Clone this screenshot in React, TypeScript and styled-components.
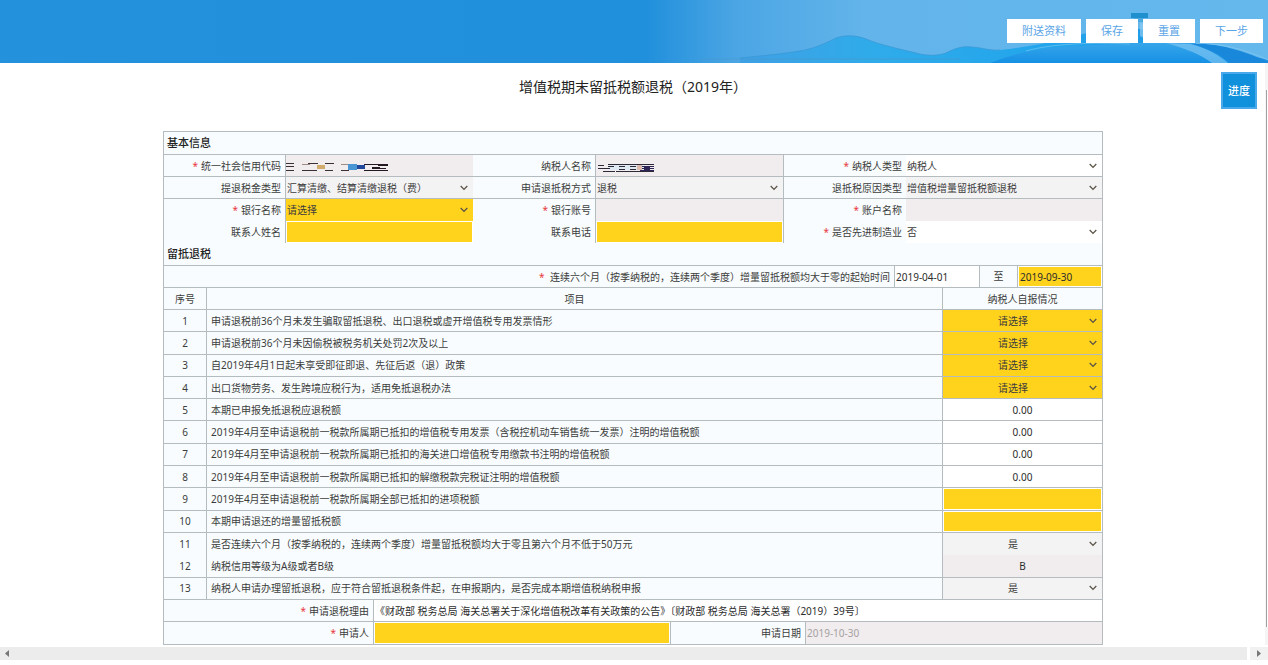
import React from "react";
import styled, { createGlobalStyle } from "styled-components";

const LINE = "#b4bcc0";
const LABEL_BG = "#f8fcfe";
const YELLOW = "#ffd21c";
const LOCKED = "#f1edee";
const MUTED = "#f4f3f4";

type Tone = "white" | "yellow" | "locked" | "muted";
const toneColor: Record<Tone, string> = {
  white: "#ffffff",
  yellow: YELLOW,
  locked: LOCKED,
  muted: MUTED,
};

const GlobalStyle = createGlobalStyle`
  *, *::before, *::after { box-sizing: border-box; }
  body {
    margin: 0;
    background: #fff;
    color: #3c3c3c;
    font-family: "Noto Sans", "Noto Sans CJK SC", sans-serif;
    font-size: 10px;
    line-height: 14px;
  }
  input, select, button { font: inherit; color: inherit; }
`;

const Page = styled.div`
  display: flex;
  flex-direction: column;
  min-height: 100vh;
`;

const Header = styled.header`
  position: relative;
  display: flex;
  justify-content: flex-end;
  height: 63px;
  padding: 19px 5px 0;
  background: linear-gradient(90deg, #2391dc 0%, #2190dc 51%, #4ba5e4 58%, #62b4ea 68%, #64b8ec 100%);
`;

const Scenery = styled.svg`
  position: absolute;
  right: 0;
  bottom: 0;
  width: 568px;
  height: 63px;
`;

const Actions = styled.div`
  position: relative;
  display: flex;
  gap: 5px;
`;

const ActionButton = styled.button`
  height: 24px;
  padding: 0 15px;
  border: 0;
  background: #fff;
  color: #5aa5e6;
  font-size: 11px;
  line-height: 24px;
`;

const Body = styled.div`
  display: flex;
`;

const Main = styled.main`
  position: relative;
  flex: 1;
  min-width: 0;
  padding: 14px 162px 0 163px;
`;

const Title = styled.h1`
  margin: 0 0 34px;
  color: #222;
  font-size: 14px;
  font-weight: 400;
  line-height: 20px;
  text-align: center;
`;

const ProgressButton = styled.button`
  position: absolute;
  top: 9px;
  right: 8px;
  width: 36px;
  height: 37px;
  padding: 0;
  border: 2px solid #4aa9ea;
  background: #1190dc;
  color: #fff;
  font-size: 11px;
  font-weight: 500;
`;

const Sheet = styled.form`
  border: 1px solid ${LINE};
  background: ${LABEL_BG};
`;

const SectionTitle = styled.h2`
  height: 23px;
  margin: 0;
  padding: 0 3px;
  border-bottom: 1px solid ${LINE};
  color: #222;
  font-size: 11px;
  font-weight: 500;
  line-height: 22px;
`;

const InfoGrid = styled.div`
  display: grid;
  grid-template-columns: 121fr 188fr 122fr 189fr 122fr 196fr;
  grid-auto-rows: 22px;
`;

const DateRow = styled.div`
  display: grid;
  grid-template-columns: 1fr 85px 39px 84px;
  grid-auto-rows: 21px;
  border-bottom: 1px solid ${LINE};
`;

const FooterGrid = styled.div`
  display: grid;
  grid-template-columns: 209fr 298fr 134fr 297fr;
  grid-auto-rows: 22px;
`;

const LabelCell = styled.label<{ $line?: boolean }>`
  padding: 0 4px;
  border-bottom: ${(p) => (p.$line ? `1px solid ${LINE}` : "0")};
  line-height: 22px;
  text-align: right;
  white-space: nowrap;
`;

const Star = styled.span`
  margin-right: 3px;
  color: #e8383d;
`;

const FieldCell = styled.div<{ $tone: Tone; $inset?: boolean; $line?: boolean; $left?: boolean; $right?: boolean; $wide?: boolean }>`
  position: relative;
  display: flex;
  min-width: 0;
  padding: ${(p) => (p.$inset ? "1px" : "0")};
  grid-column: ${(p) => (p.$wide ? "span 3" : "auto")};
  border-bottom: ${(p) => (p.$line ? `1px solid ${LINE}` : "0")};
  border-left: ${(p) => (p.$left ? `1px solid ${LINE}` : "0")};
  border-right: ${(p) => (p.$right ? `1px solid ${LINE}` : "0")};
  background: ${(p) => (p.$inset ? "#fff" : toneColor[p.$tone])};
`;

const TextInput = styled.input<{ $tone: Tone; $center?: boolean; $faded?: boolean }>`
  flex: 1;
  width: 100%;
  min-width: 0;
  height: 100%;
  padding: 0 1px;
  border: 0;
  border-radius: 0;
  outline: 0;
  background: ${(p) => toneColor[p.$tone]};
  color: ${(p) => (p.$faded ? "#a5a1a2" : "#2c2c2c")};
  text-align: ${(p) => (p.$center ? "center" : "left")};
`;

const SelectBox = styled.select<{ $tone: Tone; $center?: boolean }>`
  flex: 1;
  width: 100%;
  min-width: 0;
  height: 100%;
  padding: 0 20px 0 1px;
  border: 0;
  border-radius: 0;
  outline: 0;
  appearance: none;
  background: ${(p) => toneColor[p.$tone]};
  text-align: ${(p) => (p.$center ? "center" : "left")};
  text-align-last: ${(p) => (p.$center ? "center" : "left")};
`;

const ChevronIcon = styled.svg`
  position: absolute;
  top: 50%;
  right: 5px;
  width: 8px;
  height: 6px;
  margin-top: -3px;
  pointer-events: none;
`;

const Mosaic = styled.svg`
  position: absolute;
  top: 5px;
  left: 0;
  height: 14px;
  pointer-events: none;
`;

const Between = styled.span`
  border-left: 1px solid ${LINE};
  border-right: 1px solid ${LINE};
  background: ${LABEL_BG};
  line-height: 21px;
  text-align: center;
`;

const ItemTable = styled.table`
  width: 100%;
  height: 312px;
  table-layout: fixed;
  border-collapse: separate;
  border-spacing: 0;
`;

const Th = styled.th`
  height: 22px;
  padding: 0;
  border-bottom: 1px solid ${LINE};
  border-left: 1px solid ${LINE};
  font-weight: 400;
  text-align: center;
  &:first-child { border-left: 0; }
`;

const Td = styled.td<{ $kind: "no" | "text" | "value"; $line: boolean }>`
  height: 22px;
  padding: ${(p) => (p.$kind === "text" ? "0 4px" : "0")};
  border-bottom: ${(p) => (p.$line ? `1px solid ${LINE}` : "0")};
  border-left: ${(p) => (p.$kind === "no" ? "0" : `1px solid ${LINE}`)};
  text-align: ${(p) => (p.$kind === "text" ? "left" : "center")};
  white-space: nowrap;
`;

const ValueCell = styled.div<{ $inset?: boolean }>`
  position: relative;
  display: flex;
  height: 100%;
  min-height: 21px;
  padding: ${(p) => (p.$inset ? "1px" : "0")};
  background: #fff;
`;

const VerticalTrack = styled.div`
  display: flex;
  width: 3px;
  padding: 27px 0 18px 1px;
  background: #f5f5f5;
`;

const VerticalThumb = styled.div`
  flex: 1;
  border-left: 1px solid #a0a0a0;
  background: #fff;
`;

const HorizontalBar = styled.div`
  display: flex;
  gap: 3px;
  height: 13px;
  margin: 2px 0 6px;
`;

const HorizontalTrack = styled.div`
  display: flex;
  flex: 1;
  align-items: center;
  padding: 0 5px;
  background: #ececec;
`;

const TrackEnd = styled.div`
  display: flex;
  align-items: center;
  justify-content: center;
  width: 18px;
  background: #f1f1f1;
`;

const Arrow = styled.svg`
  width: 4px;
  height: 7px;
`;

const Chevron = () => (
  <ChevronIcon viewBox="0 0 8 6" fill="none" stroke="#5c5648" strokeWidth="1.3" aria-hidden="true">
    <path d="M0.7 1 L4 4.4 L7.3 1" />
  </ChevronIcon>
);

const CreditCodeMask = () => (
  <Mosaic viewBox="0 0 104 14" width="104" aria-hidden="true">
    <g fill="#3b3034">
      <rect x="0" y="3" width="8" height="1" /><rect x="0" y="6" width="8" height="1" /><rect x="0" y="10" width="8" height="1" />
      <rect x="22" y="3" width="10" height="1" /><rect x="39" y="3" width="9" height="1" />
      <rect x="16" y="10" width="15" height="1" /><rect x="39" y="10" width="8" height="1" />
      <rect x="55" y="10" width="8" height="1" />
    </g>
    <g fill="#a08a86">
      <rect x="16" y="4" width="8" height="1" /><rect x="55" y="4" width="8" height="1" />
    </g>
    <g fill="#241823">
      <rect x="78" y="4" width="16" height="1" /><rect x="92" y="4" width="10" height="2" />
      <rect x="86" y="7" width="8" height="2" /><rect x="78" y="10" width="24" height="1" />
      <rect x="92" y="8" width="8" height="1" />
    </g>
    <rect x="31" y="5" width="8" height="4" fill="#d0ab6c" />
    <rect x="62" y="4" width="9" height="6" fill="#4a95d4" />
    <rect x="71" y="5" width="8" height="4" fill="#23479a" />
  </Mosaic>
);

const NameMask = () => (
  <Mosaic viewBox="0 0 60 14" width="60" aria-hidden="true">
    <rect x="13" y="5" width="36" height="5" fill="#dfe9f3" />
    <g fill="#2d2936">
      <rect x="2" y="5" width="6" height="1" /><rect x="2" y="8" width="12" height="1" /><rect x="7" y="11" width="12" height="1" />
      <rect x="12" y="4" width="46" height="1" /><rect x="12" y="6" width="6" height="1" /><rect x="20" y="11" width="38" height="1" />
      <rect x="23" y="6" width="6" height="1" /><rect x="23" y="9" width="6" height="1" /><rect x="34" y="6" width="6" height="1" /><rect x="34" y="9" width="6" height="1" />
    </g>
    <rect x="41" y="5" width="5" height="5" fill="#dcb9ae" />
    <g fill="#2e2456">
      <rect x="48" y="6" width="6" height="5" /><rect x="46" y="6" width="12" height="1" /><rect x="46" y="8" width="12" height="1" /><rect x="44" y="10" width="14" height="1" />
    </g>
  </Mosaic>
);

interface InfoField {
  id: string;
  label: string;
  required?: boolean;
  kind: "input" | "select";
  value?: string;
  tone: Tone;
  mask?: React.ReactNode;
}

const infoRows: InfoField[][] = [
  [
    { id: "creditCode", label: "统一社会信用代码", required: true, kind: "input", tone: "locked", mask: <CreditCodeMask /> },
    { id: "payerName", label: "纳税人名称", kind: "input", tone: "locked", mask: <NameMask /> },
    { id: "payerType", label: "纳税人类型", required: true, kind: "select", value: "纳税人", tone: "white" },
  ],
  [
    { id: "refundType", label: "提退税金类型", kind: "select", value: "汇算清缴、结算清缴退税（费）", tone: "muted" },
    { id: "refundMethod", label: "申请退抵税方式", kind: "select", value: "退税", tone: "muted" },
    { id: "refundReason", label: "退抵税原因类型", kind: "select", value: "增值税增量留抵税额退税", tone: "muted" },
  ],
  [
    { id: "bankName", label: "银行名称", required: true, kind: "select", value: "请选择", tone: "yellow" },
    { id: "bankAccount", label: "银行账号", required: true, kind: "input", tone: "locked" },
    { id: "accountName", label: "账户名称", required: true, kind: "input", tone: "locked" },
  ],
  [
    { id: "contactName", label: "联系人姓名", kind: "input", tone: "yellow" },
    { id: "contactPhone", label: "联系电话", kind: "input", tone: "yellow" },
    { id: "advanced", label: "是否先进制造业", required: true, kind: "select", value: "否", tone: "white" },
  ],
];

interface Item {
  text: string;
  kind: "input" | "select";
  value: string;
  tone: Tone;
}

const items: Item[] = [
  { text: "申请退税前36个月未发生骗取留抵退税、出口退税或虚开增值税专用发票情形", kind: "select", value: "请选择", tone: "yellow" },
  { text: "申请退税前36个月未因偷税被税务机关处罚2次及以上", kind: "select", value: "请选择", tone: "yellow" },
  { text: "自2019年4月1日起未享受即征即退、先征后返（退）政策", kind: "select", value: "请选择", tone: "yellow" },
  { text: "出口货物劳务、发生跨境应税行为，适用免抵退税办法", kind: "select", value: "请选择", tone: "yellow" },
  { text: "本期已申报免抵退税应退税额", kind: "input", value: "0.00", tone: "white" },
  { text: "2019年4月至申请退税前一税款所属期已抵扣的增值税专用发票（含税控机动车销售统一发票）注明的增值税额", kind: "input", value: "0.00", tone: "white" },
  { text: "2019年4月至申请退税前一税款所属期已抵扣的海关进口增值税专用缴款书注明的增值税额", kind: "input", value: "0.00", tone: "white" },
  { text: "2019年4月至申请退税前一税款所属期已抵扣的解缴税款完税证注明的增值税额", kind: "input", value: "0.00", tone: "white" },
  { text: "2019年4月至申请退税前一税款所属期全部已抵扣的进项税额", kind: "input", value: "", tone: "yellow" },
  { text: "本期申请退还的增量留抵税额", kind: "input", value: "", tone: "yellow" },
  { text: "是否连续六个月（按季纳税的，连续两个季度）增量留抵税额均大于零且第六个月不低于50万元", kind: "select", value: "是", tone: "muted" },
  { text: "纳税信用等级为A级或者B级", kind: "input", value: "B", tone: "locked" },
  { text: "纳税人申请办理留抵退税，应于符合留抵退税条件起，在申报期内，是否完成本期增值税纳税申报", kind: "select", value: "是", tone: "muted" },
];

const HeaderScenery = () => (
  <Scenery viewBox="0 0 568 63" aria-hidden="true">
    <defs>
      <linearGradient id="hill" x1="0" x2="1" y1="0" y2="0">
        <stop offset="0" stopColor="#3fa0e4" />
        <stop offset="0.25" stopColor="#2fabea" />
        <stop offset="0.6" stopColor="#22a5ec" />
        <stop offset="1" stopColor="#1b8fe2" />
      </linearGradient>
      <linearGradient id="shore" x1="0" x2="0" y1="0" y2="1">
        <stop offset="0" stopColor="#38a6ea" />
        <stop offset="1" stopColor="#1590e4" />
      </linearGradient>
    </defs>
    <path d="M40 58 C70 55 90 53 105 50 C118 47 128 42 136 38 C144 35 156 35 166 39 C180 45 200 49 216 53 C226 56 238 56 246 53 C256 48 262 46 272 47 C284 48 290 51 300 50 C340 46 366 38 400 30 C424 26 440 28 452 32 C480 42 520 48 568 60 V63 H40 Z" fill="url(#hill)" />
    <path d="M40 58 C70 55 90 53 105 50 C118 47 128 42 136 38 C144 35 156 35 166 39 C180 45 200 49 216 53 C226 56 238 56 246 53 C256 48 262 46 272 47 C284 48 290 51 300 50" fill="none" stroke="#3a98d6" strokeWidth="0.8" />
    <path d="M0 59 H260" stroke="#4a97c8" strokeWidth="0.6" />
    <path d="M290 63 C320 52 340 47 380 46 C430 43 470 41 500 44 C530 50 550 56 568 62 V63 Z" fill="url(#shore)" />
    <path d="M326 51 C350 44 390 42 430 44" fill="none" stroke="#6fc0f0" strokeWidth="0.8" />
    <path d="M440 22 L448 26 L448 40 L440 36 Z" fill="#8ccbf2" opacity="0.7" />
    <path d="M466 43 L490 44 C508 48 520 56 528 63 H512 C500 54 484 48 466 43 Z" fill="#7cc4f2" opacity="0.7" />
    <path d="M492 44 C516 42 548 52 568 62 V63 H530 C520 54 506 48 492 44 Z" fill="#1a88da" />
    <path d="M496 43 C520 43 548 50 568 60" fill="none" stroke="#7cc6f2" strokeWidth="0.8" />
    <rect x="431" y="13" width="17" height="5" fill="#1f8fcd" />
    <path d="M434 18 H444 V22 H434 Z" fill="#4aa9e0" />
  </Scenery>
);

const Req = () => <Star>*</Star>;

export default function App() {
  return (
    <Page>
      <GlobalStyle />
      <Header>
        <HeaderScenery />
        <Actions>
          {["附送资料", "保存", "重置", "下一步"].map((t) => (
            <ActionButton key={t} type="button">{t}</ActionButton>
          ))}
        </Actions>
      </Header>
      <Body>
        <Main>
          <Title>增值税期末留抵税额退税（2019年）</Title>
          <ProgressButton type="button">进度</ProgressButton>
          <Sheet>
            <SectionTitle>基本信息</SectionTitle>
            <InfoGrid>
              {infoRows.map((row, r) =>
                row.map((f, c) => (
                  <React.Fragment key={f.id}>
                    <LabelCell htmlFor={f.id} $line={r < 2}>
                      {f.required && <Req />}
                      {f.label}
                    </LabelCell>
                    <FieldCell $tone={f.tone} $inset={r === 3 && f.kind === "input"} $line={r < 2} $left={c < 2} $right={c === 1}>
                      {f.kind === "select" ? (
                        <>
                          <SelectBox id={f.id} $tone={f.tone}>
                            <option>{f.value}</option>
                          </SelectBox>
                          <Chevron />
                        </>
                      ) : (
                        <TextInput id={f.id} $tone={f.tone} readOnly={f.tone === "locked"} />
                      )}
                      {f.mask}
                    </FieldCell>
                  </React.Fragment>
                ))
              )}
            </InfoGrid>
            <SectionTitle>留抵退税</SectionTitle>
            <DateRow>
              <LabelCell htmlFor="dateFrom">
                <Req /> 连续六个月（按季纳税的，连续两个季度）增量留抵税额均大于零的起始时间
              </LabelCell>
              <FieldCell $tone="white" $left>
                <TextInput id="dateFrom" $tone="white" defaultValue="2019-04-01" />
              </FieldCell>
              <Between>至</Between>
              <FieldCell $tone="yellow" $inset>
                <TextInput aria-label="截止时间" $tone="yellow" defaultValue="2019-09-30" />
              </FieldCell>
            </DateRow>
            <ItemTable>
              <colgroup>
                <col style={{ width: 42 }} />
                <col />
                <col style={{ width: 160 }} />
              </colgroup>
              <thead>
                <tr>
                  <Th scope="col">序号</Th>
                  <Th scope="col">项目</Th>
                  <Th scope="col">纳税人自报情况</Th>
                </tr>
              </thead>
              <tbody>
                {items.map((it, i) => {
                  const line = i !== 10;
                  const id = `item${i + 1}`;
                  return (
                    <tr key={id}>
                      <Td $kind="no" $line={line}>{i + 1}</Td>
                      <Td $kind="text" $line={line}>
                        <label htmlFor={id}>{it.text}</label>
                      </Td>
                      <Td $kind="value" $line={line}>
                        <ValueCell $inset={it.kind === "input" && it.tone === "yellow"}>
                          {it.kind === "select" ? (
                            <>
                              <SelectBox id={id} $tone={it.tone} $center>
                                <option>{it.value}</option>
                              </SelectBox>
                              <Chevron />
                            </>
                          ) : (
                            <TextInput id={id} $tone={it.tone} $center defaultValue={it.value} />
                          )}
                        </ValueCell>
                      </Td>
                    </tr>
                  );
                })}
              </tbody>
            </ItemTable>
            <FooterGrid>
              <LabelCell htmlFor="reason" $line><Req />申请退税理由</LabelCell>
              <FieldCell $tone="white" $left $line $wide>
                <TextInput
                  id="reason"
                  $tone="white"
                  defaultValue="《财政部 税务总局 海关总署关于深化增值税改革有关政策的公告》〔财政部 税务总局 海关总署（2019）39号〕"
                />
              </FieldCell>
              <LabelCell htmlFor="applicant"><Req />申请人</LabelCell>
              <FieldCell $tone="yellow" $inset $left $right>
                <TextInput id="applicant" $tone="yellow" />
              </FieldCell>
              <LabelCell htmlFor="applyDate">申请日期</LabelCell>
              <FieldCell $tone="locked" $left>
                <TextInput id="applyDate" $tone="locked" $faded readOnly defaultValue="2019-10-30" />
              </FieldCell>
            </FooterGrid>
          </Sheet>
        </Main>
        <VerticalTrack>
          <VerticalThumb />
        </VerticalTrack>
      </Body>
      <HorizontalBar>
        <HorizontalTrack>
          <Arrow viewBox="0 0 4 7" aria-hidden="true"><path d="M4 0 V7 L0 3.5 Z" fill="#777" /></Arrow>
        </HorizontalTrack>
        <TrackEnd>
          <Arrow viewBox="0 0 4 7" aria-hidden="true"><path d="M0 0 V7 L4 3.5 Z" fill="#777" /></Arrow>
        </TrackEnd>
      </HorizontalBar>
    </Page>
  );
}
